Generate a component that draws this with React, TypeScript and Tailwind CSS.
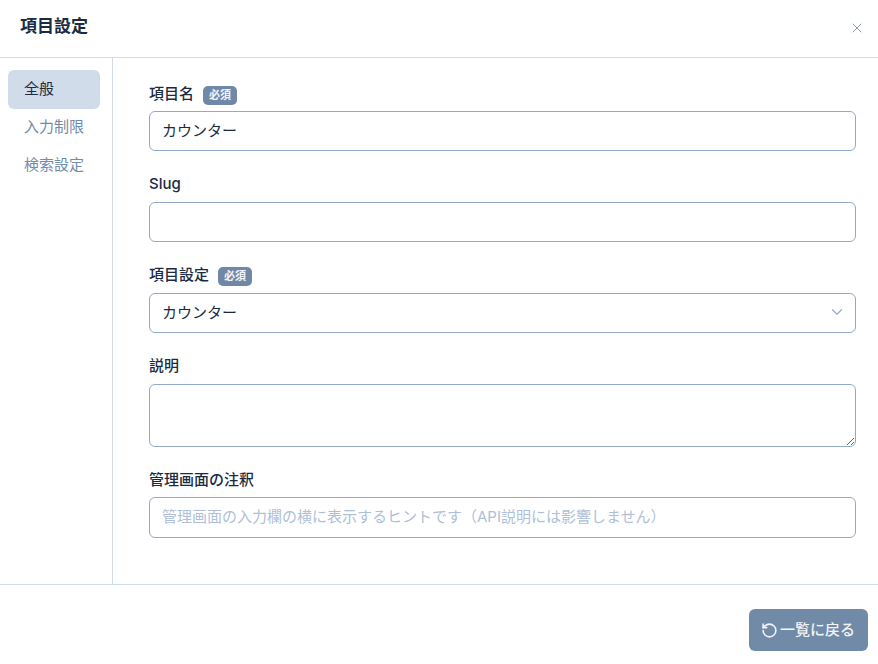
import { ChevronDown, RotateCcw, X } from "lucide-react";

const Required = () => (
  <span className="inline-flex h-[19px] translate-y-[1px] items-center rounded-[5px] bg-[#7088a8] px-[6px] text-[11px] font-bold text-white/90">
    必須
  </span>
);

const Label = ({ text, required }: { text: string; required?: boolean }) => (
  <div className="flex h-[22px] items-center gap-[9px]">
    <span className="text-[15px] font-medium leading-[22px] text-[#1a2b42]">{text}</span>
    {required && <Required />}
  </div>
);

const inputClass =
  "block h-10 w-full rounded-[6px] border border-[#94a9c9] bg-white px-3 text-[15px] text-[#1a2b42] outline-none placeholder:text-[#aebfd7]";

const NavItem = ({ label, active }: { label: string; active?: boolean }) => (
  <div
    className={
      active
        ? "flex h-[39px] items-center rounded-[6px] bg-[#d0dcea] px-4 pb-[1px] text-[15px] text-[#1a2b42]"
        : "flex h-[38px] items-center px-4 pb-[1px] text-[15px] text-[#718bab]"
    }
  >
    {label}
  </div>
);

export default function App() {
  return (
    <div className="flex h-[664px] w-[878px] flex-col overflow-hidden bg-white font-['Inter','Noto_Sans_CJK_SC',sans-serif]">
      {/* header */}
      <div className="flex h-[58px] shrink-0 items-center justify-between border-b border-[#d0dcea] pb-[3px] pl-5 pr-[13px]">
        <h1 className="text-[17px] font-bold text-[#1a2b42]">項目設定</h1>
        <button className="mt-[2px] text-[#718096]">
          <X size={16} strokeWidth={1.2} />
        </button>
      </div>

      {/* body */}
      <div className="flex h-[527px] shrink-0 border-b border-[#d0dcea]">
        <div className="w-[113px] shrink-0 border-r border-[#d0dcea] pl-2 pr-3 pt-3">
          <NavItem label="全般" active />
          <NavItem label="入力制限" />
          <NavItem label="検索設定" />
        </div>
        <div className="flex flex-1 flex-col pl-9 pr-[22px] pt-[25px]">
          <Label text="項目名" required />
          <input className={`${inputClass} mt-[6px] pb-[3px]`} defaultValue="カウンター" />

          <div className="mt-[22px]">
            <Label text="Slug" />
          </div>
          <input className={`${inputClass} mt-[7px]`} />

          <div className="mt-[22px]">
            <Label text="項目設定" required />
          </div>
          <div className="relative mt-[7px]">
            <select className={`${inputClass} appearance-none`} defaultValue="counter">
              <option value="counter">カウンター</option>
            </select>
            <ChevronDown
              size={18}
              strokeWidth={1.5}
              className="pointer-events-none absolute right-[10px] top-[10px] text-[#94a9c9]"
            />
          </div>

          <div className="mt-[22px]">
            <Label text="説明" />
          </div>
          <textarea className="mt-[7px] block h-[63px] w-full rounded-[6px] border border-[#94a9c9] bg-white px-3 py-2 text-[15px] text-[#1a2b42] outline-none" />

          <div className="mt-[22px]">
            <Label text="管理画面の注釈" />
          </div>
          <input
            className={`${inputClass} mt-[6px] h-[41px] pb-[2px]`}
            placeholder="管理画面の入力欄の横に表示するヒントです（API説明には影響しません）"
          />
        </div>
      </div>

      {/* footer */}
      <div className="flex flex-1 items-start justify-end pr-[10px] pt-[24px]">
        <button className="flex h-[42px] w-[119px] items-center justify-center gap-[2px] rounded-[6px] bg-[#718aa8] pr-[1px] text-[15px] font-medium text-white/90">
          <RotateCcw size={17} strokeWidth={2.25} />
          一覧に戻る
        </button>
      </div>
    </div>
  );
}
